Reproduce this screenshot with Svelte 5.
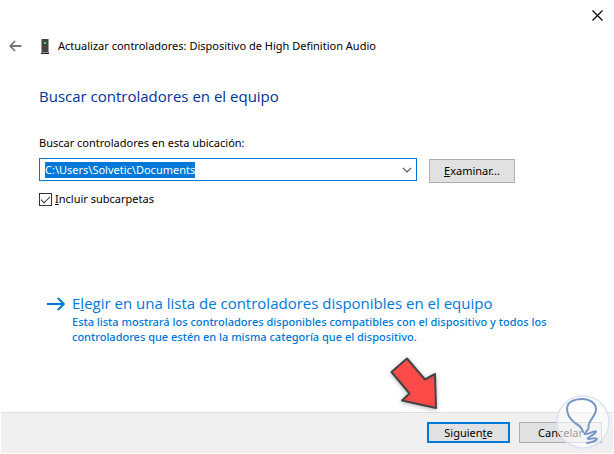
<script>
	import { onMount } from 'svelte';

	let device = 'Dispositivo de High Definition Audio';
	let path = 'C:\\Users\\Solvetic\\Documents';
	let subfolders = true;
	let pathInput;

	onMount(() => {
		pathInput.focus();
		pathInput.select();
	});
</script>

<main class="wizard">
	<div class="titlebar">
		<button class="icon-button" aria-label="Cerrar">
			<svg width="11" height="11" viewBox="0 0 11 11">
				<path d="M0.5 0.5 L10.5 10.5 M10.5 0.5 L0.5 10.5" stroke="#000" stroke-width="1.2" fill="none" />
			</svg>
		</button>
	</div>

	<header>
		<button class="icon-button" aria-label="Atrás">
			<svg width="13" height="12" viewBox="0 0 13 12">
				<path d="M6 1 L1.2 6 L6 11 M1.5 6 H12.5" stroke="#777" stroke-width="1.8" fill="none" />
			</svg>
		</button>
		<svg class="device" width="8" height="15" viewBox="0 0 8 15">
			<rect x="0.5" y="0" width="7" height="13" fill="#444" />
			<rect x="0" y="13.5" width="8" height="1.5" fill="#222" />
			<rect x="3" y="3" width="2" height="2" fill="#3cf04a" />
		</svg>
		<span>Actualizar controladores: {device}</span>
	</header>

	<section class="content">
		<h1>Buscar controladores en el equipo</h1>

		<label class="caption" for="path">Buscar controladores en esta ubicación:</label>
		<div class="row">
			<div class="combo">
				<input id="path" type="text" spellcheck="false" bind:value={path} bind:this={pathInput} />
				<button class="icon-button" aria-label="Mostrar ubicaciones">
					<svg width="10" height="6" viewBox="0 0 10 6">
						<path d="M0.8 0.8 L5 5 L9.2 0.8" stroke="#555" stroke-width="1.2" fill="none" />
					</svg>
				</button>
			</div>
			<button class="push browse"><span><u>E</u>xaminar...</span></button>
		</div>

		<label class="check">
			<input type="checkbox" bind:checked={subfolders} />
			<span><u>I</u>ncluir subcarpetas</span>
		</label>

		<a class="command" href="#lista">
			<svg width="18" height="14" viewBox="0 0 18 14">
				<path d="M0 7 H16.5 M10.8 1 L16.8 7 L10.8 13" stroke="#0078d7" stroke-width="2" fill="none" />
			</svg>
			<span class="command-text">
				<span class="command-title">E<u>l</u>egir en una lista de controladores disponibles en el equipo</span>
				<span class="command-note"
					>Esta lista mostrará los controladores disponibles compatibles con el dispositivo y todos los
					controladores que estén en la misma categoría que el dispositivo.</span
				>
			</span>
		</a>
	</section>

	<footer>
		<button class="push next"><span>Siguien<u>t</u>e</span></button>
		<button class="push">Cancelar</button>
	</footer>

	<svg class="pointer" width="52" height="58" viewBox="0 0 52 58">
		<path
			d="M3.5 18 L19 4.5 L37 25.5 L47 20 L48 54 L14 46.5 L21.5 39.5 Z"
			fill="#ff4a4a"
			stroke="#444"
			stroke-width="2"
			stroke-linejoin="round"
		/>
	</svg>

	<svg class="badge" width="56" height="56" viewBox="0 0 56 56">
		<circle cx="28" cy="28" r="26" fill="#fff" fill-opacity="0.6" stroke="#dbe3f0" stroke-width="1.5" />
		<path
			d="M28 38 C27 34 24 31 20 29 C15 25 12 20 12 15 C12 8 19 5 27 5 C36 5 41 10 41 15 C41 22 34 26 33.500 32 C35 35 31 37 29.500 40 C33 41 37 37 41 37.500 C40 41 34 42 32.500 44.500 C35 46 38 43 42 45 C41 47 36 48.500 32 49"
			fill="none"
			stroke="#7797c7"
			stroke-width="2"
			stroke-linecap="round"
			stroke-linejoin="round"
		/>
	</svg>
</main>

<style>
	:global(body) {
		margin: 0;
		background: #fff;
	}

	.wizard {
		position: relative;
		display: flex;
		flex-direction: column;
		box-sizing: border-box;
		min-height: 100vh;
		padding: 0 1px 1px;

		color: #000;
		font-family: 'Noto Sans', 'Open Sans', sans-serif;
		font-size: 11px;
		line-height: 16px;
	}

	button,
	input {
		font: inherit;
		color: inherit;
	}

	.icon-button {
		display: grid;
		place-items: center;
		padding: 0;
		border: none;
		background: none;
	}

	.titlebar {
		display: flex;
		justify-content: flex-end;
		padding: 10px 10px 0 0;
	}

	header {
		display: flex;
		align-items: center;
		padding: 17px 8px 0;
	}

	.device {
		margin: 0 9px 0 19px;
	}

	.content {
		flex: 1;
		padding: 0 38px;
	}

	h1,
	.command-title {
		font-family: 'Open Sans', 'Noto Sans', sans-serif;
		font-size: 15px;
		line-height: 22px;
		font-weight: normal;
	}

	h1 {
		margin: 31px 0 0;
		color: #003399;
	}

	.caption {
		display: block;
		margin: 28px 0 7px;
	}

	.row {
		display: flex;
		align-items: flex-start;
		gap: 12px;
		padding-right: 60px;
	}

	.combo {
		flex: 1;
		display: flex;
		box-sizing: border-box;
		height: 23px;
		padding: 0 4px;
		border: 1px solid #0078d7;
	}

	.combo input {
		flex: 1;
		min-width: 0;
		padding: 0 1px;
		border: none;
		outline: none;
		background: none;
	}

	.combo input::selection {
		color: #fff;
		background: #0078d7;
	}

	.push {
		box-sizing: border-box;
		width: 83px;
		height: 21px;
		padding: 0;
		border: 1px solid #adadad;
		background: #e1e1e1;
		line-height: 18px;
	}

	.browse {
		width: 86px;
		height: 24px;
		margin-top: 1px;
	}

	.next {
		border: 2px solid #0078d7;
	}

	.check {
		display: flex;
		align-items: center;
		gap: 3px;
		margin-top: 8px;
	}

	.check input {
		appearance: none;
		display: grid;
		place-items: center;
		box-sizing: border-box;
		width: 13px;
		height: 13px;
		margin: 0;
		border: 1px solid #333;
		background: #fff;
	}

	.check input:checked::before {
		content: '';
		width: 8px;
		height: 4px;
		border: solid #333;
		border-width: 0 0 1px 1px;
		transform: translateY(-1px) rotate(-45deg);
	}

	.command {
		display: flex;
		gap: 7px;
		margin: 85px 0 0 8px;
		color: #0078d7;
		text-decoration: none;
	}

	.command svg {
		flex: none;
		margin-top: 5px;
	}

	.command-title,
	.command-note {
		display: block;
	}

	.command-note {
		font-weight: 500;
		line-height: 15px;
	}

	footer {
		display: flex;
		justify-content: flex-end;
		gap: 9px;
		padding: 9px 11px 10px;
		border-top: 1px solid #dfdfdf;
		background: #f0f0f0;
	}

	.pointer,
	.badge {
		position: absolute;
		pointer-events: none;
	}

	.pointer {
		right: 174px;
		bottom: 42px;
		filter: drop-shadow(0 1px 2px rgba(0, 0, 0, 0.3));
	}

	.badge {
		right: 3px;
		bottom: 4px;
	}
</style>
